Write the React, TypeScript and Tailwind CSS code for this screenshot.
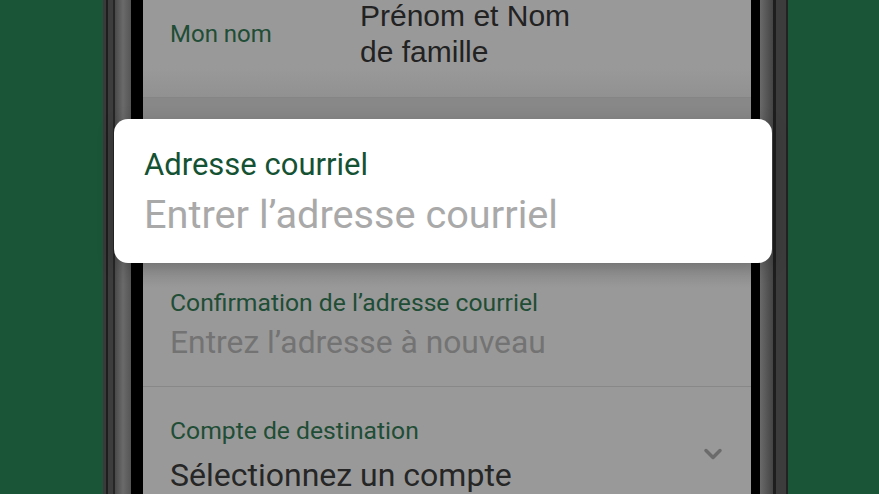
import React from 'react';
import { ChevronDown } from 'lucide-react';

const roboto = { fontFamily: 'Roboto, "Noto Sans", sans-serif' };

const App: React.FC = () => {
  return (
    <div className="relative flex h-[494px] w-[879px] overflow-hidden bg-[#1b5538]" style={roboto}>
      {/* left background */}
      <div className="w-[103px] shrink-0" />

      {/* phone frame, left side */}
      <div className="flex h-full w-[40px] shrink-0">
        <div className="w-[3px] bg-[#3a3a3a]" />
        <div className="w-[2px] bg-[#1e1e1e]" />
        <div className="w-[5px] bg-[#3d3d3d]" />
        <div className="w-[2px] bg-[#262626]" />
        <div className="w-[16px] bg-gradient-to-r from-[#4a4a4a] via-[#6a6a6a] to-[#555555]" />
        <div className="w-[12px] bg-black" />
      </div>

      {/* screen (dimmed) */}
      <div className="flex h-full w-[608px] shrink-0 flex-col bg-[#999999]">
        <div className="flex h-[97px] shrink-0 items-center overflow-visible bg-gradient-to-b from-[#999999] from-70% to-[#919191] pb-[29px] pl-[27px]">
          <span className="w-[190px] shrink-0 text-[24px] leading-[28px] text-[#1f4d35]">Mon nom</span>
          <span
            className="text-[30px] leading-[36px] text-[#222222]"
            style={{ fontFamily: '"Liberation Sans", Arial, sans-serif' }}
          >
            Prénom et Nom
            <br />
            de famille
          </span>
        </div>
        <div className="h-px shrink-0 bg-[#858585]" />
        <div className="h-[166px] shrink-0 bg-[#888888]" />
        <div className="flex h-[122px] shrink-0 flex-col gap-[5px] bg-gradient-to-b from-[#8b8b8b] to-[#999999] to-20% pl-[27px] pt-[24px]">
          <span className="text-[24.7px] leading-[30px] text-[#1f4d35]">Confirmation de l’adresse courriel</span>
          <span className="text-[31.8px] leading-[38px] text-[#737373]">Entrez l’adresse à nouveau</span>
        </div>
        <div className="h-px shrink-0 bg-[#888888]" />
        <div className="flex flex-1 items-start justify-between pl-[27px] pr-[24px] pt-[29px]">
          <div className="flex flex-col gap-[10px]">
            <span className="text-[24.7px] leading-[30px] text-[#1f4d35]">Compte de destination</span>
            <span className="text-[32px] leading-[38px] text-[#262626]">Sélectionnez un compte</span>
          </div>
          <ChevronDown className="mt-[24px] h-[28px] w-[28px] text-[#6b6b6b]" strokeWidth={3} />
        </div>
      </div>

      {/* phone frame, right side */}
      <div className="flex h-full w-[37px] shrink-0">
        <div className="w-[9px] bg-black" />
        <div className="w-[13px] bg-gradient-to-r from-[#6a6a6a] to-[#444444]" />
        <div className="w-[3px] bg-[#1e1e1e]" />
        <div className="w-[10px] bg-[#3c3c3c]" />
        <div className="w-[2px] bg-[#222222]" />
      </div>

      {/* zoomed field card */}
      <div className="absolute left-[114px] top-[119px] flex h-[144px] w-[658px] flex-col gap-[9px] rounded-[14px] bg-white pl-[30px] pt-[28px] shadow-[0_4px_18px_rgba(0,0,0,0.18)]">
        <span className="text-[31px] leading-[36px] text-[#145233]">Adresse courriel</span>
        <span className="text-[39.7px] leading-[46px] text-[#a9a9a9]">Entrer l’adresse courriel</span>
      </div>
    </div>
  );
};

export default App;
